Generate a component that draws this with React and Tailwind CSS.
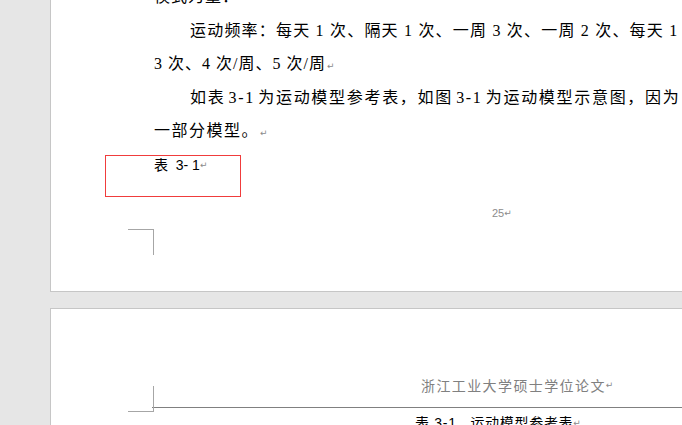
import React from 'react';

// paragraph mark, as Word shows it
const Mark = ({ className = '' }) => (
  <span className={`font-['DejaVu_Sans',sans-serif] text-[9px] leading-none tracking-normal text-[#8a8a8a] ${className}`}>↵</span>
);

const bodyLines = [
  { text: '模式为量：', indent: false, tracking: 'tracking-[1px]' },
  { text: '运动频率：每天 1 次、隔天 1 次、一周 3 次、一周 2 次、每天 1', indent: true, tracking: 'tracking-[1.2px]' },
  { text: '3 次、4 次/周、5 次/周', indent: false, tracking: 'tracking-[1px]', mark: true },
  { text: '如表 3-1 为运动模型参考表，如图 3-1 为运动模型示意图，因为', indent: true, tracking: 'tracking-[1.7px] [word-spacing:-2.5px]' },
  { text: '一部分模型。', indent: false, tracking: 'tracking-[1.5px]', mark: true },
];

const PageOne = () => (
  <div className="ml-[50px] h-[292px] w-[700px] overflow-hidden border-b border-l border-[#c6c6c6] bg-white">
    {/* body text, top line runs off the top of the view */}
    <div className="-mt-[20px] pl-[103px] font-['Liberation_Serif','Noto_Sans_CJK_SC',serif] text-[16px] leading-[33.5px] text-black">
      {bodyLines.map((line, i) => (
        <div key={i} className={`h-[33.5px] whitespace-nowrap ${line.tracking} ${line.indent ? 'indent-[36px]' : ''}`}>
          {line.text}
          {line.mark && <Mark className="ml-[1px]" />}
        </div>
      ))}
    </div>

    {/* caption box with the red outline */}
    <div className="ml-[54px] mt-[7px] h-[42px] w-[136px] border border-[#f03c3c] pl-[48px] pt-[2px]">
      <div className="flex h-[16px] items-center whitespace-pre font-['Liberation_Sans','Noto_Sans_CJK_SC',sans-serif] text-[14px] text-black">
        <span>表  3- 1</span>
        <Mark />
      </div>
    </div>

    {/* footer page number */}
    <div className="ml-[441px] mt-[10px] flex h-[14px] items-center font-['Liberation_Sans',sans-serif] text-[11px] text-[#8c8c8c]">
      <span>25</span>
      <Mark />
    </div>

    {/* bottom-left margin mark */}
    <div className="ml-[77px] mt-[8px] h-[26px] w-[26px] border-r border-t border-[#a6a6a6]" />
  </div>
);

const PageTwo = () => (
  <div className="relative ml-[50px] mt-[16px] h-[200px] w-[700px] border-l border-t border-[#c6c6c6] bg-white pt-[66px]">
    {/* top-left margin mark */}
    <div className="absolute left-[77px] top-[77px] h-[26px] w-[26px] border-b border-r border-[#a6a6a6]" />

    {/* running header */}
    <div className="ml-[101px] border-b border-[#808080] pb-[12px] pl-[269px]">
      <div className="flex h-[20px] items-center whitespace-nowrap">
        <span className="font-['Noto_Sans_CJK_SC',sans-serif] text-[14px] tracking-[1.4px] text-[#808080]">
          浙江工业大学硕士学位论文
        </span>
        <Mark />
      </div>
    </div>

    {/* table caption, cut by the window */}
    <div className="mt-[6px] flex h-[18px] items-center whitespace-pre pl-[364px] font-['Liberation_Sans','Noto_Sans_CJK_SC',sans-serif] text-[14px] text-black">
      <span className="tracking-[0.7px]">表 3-1   运动模型参考表</span>
      <Mark />
    </div>
  </div>
);

export default function App() {
  return (
    <div className="h-[425px] w-[682px] overflow-hidden bg-[#e6e6e6]">
      <PageOne />
      <PageTwo />
    </div>
  );
}
